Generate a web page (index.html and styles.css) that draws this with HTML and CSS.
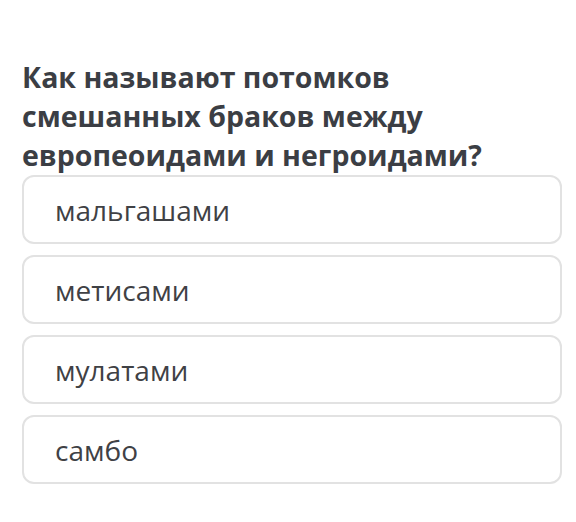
FILE: index.html
```html
<!DOCTYPE html>
<html lang="ru">
<head>
<meta charset="utf-8">
<link rel="stylesheet" href="styles.css">
</head>
<body>
<div class="quiz">
  <h1 class="question">Как называют потомков смешанных браков между европеоидами и негроидами?</h1>
  <div class="options">
    <div class="option">мальгашами</div>
    <div class="option">метисами</div>
    <div class="option">мулатами</div>
    <div class="option">самбо</div>
  </div>
</div>
</body>
</html>
```
FILE: styles.css
```css
html, body {
  margin: 0;
  padding: 0;
  background: #ffffff;
}
body {
  font-family: "Open Sans", "Noto Sans", sans-serif;
}
.quiz {
  padding: 58px 14px 0 22px;
}
.question {
  margin: 0;
  font-size: 28.5px;
  font-weight: 700;
  line-height: 39px;
  color: #3b3e44;
  width: 500px;
}
.options {
  display: flex;
  flex-direction: column;
  gap: 11px;
}
.option {
  height: 65px;
  border: 2px solid #e2e2e2;
  border-radius: 12px;
  box-sizing: content-box;
  display: flex;
  align-items: center;
  padding: 0 30px 0 31px;
  font-size: 28px;
  color: #3f4145;
}
```
